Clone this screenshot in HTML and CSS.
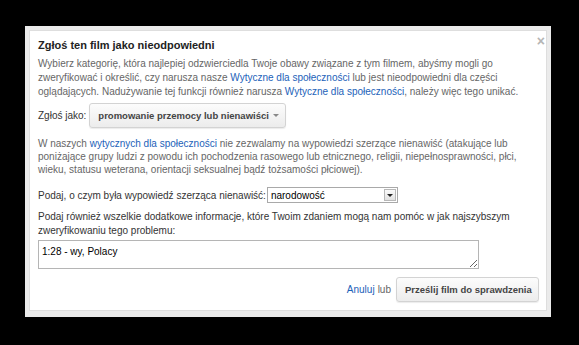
FILE: index.html
```html
<!DOCTYPE html>
<html lang="pl">
<head>
    <meta charset="UTF-8">
    <title>Zgłoś ten film</title>
    <link rel="stylesheet" href="styles.css">
</head>
<body>
    <div class="dialog">
        <div class="dialog-inner">
            <span class="close">&#215;</span>
            <h2 class="title">Zgłoś ten film jako nieodpowiedni</h2>
            <p class="help">Wybierz kategorię, która najlepiej odzwierciedla Twoje obawy związane z tym filmem, abyśmy mogli go zweryfikować i określić, czy narusza nasze <a href="#">Wytyczne dla społeczności</a> lub jest nieodpowiedni dla części oglądających. Nadużywanie tej funkcji również narusza <a href="#">Wytyczne dla społeczności</a>, należy więc tego unikać.</p>

            <div class="row reason-row">
                <span class="label">Zgłoś jako:</span>
                <button class="btn reason-btn">promowanie przemocy lub nienawiści <span class="caret"></span></button>
            </div>

            <p class="help note">W naszych <a href="#">wytycznych dla społeczności</a> nie zezwalamy na wypowiedzi szerzące nienawiść (atakujące lub poniżające grupy ludzi z powodu ich pochodzenia rasowego lub etnicznego, religii, niepełnosprawności, płci, wieku, statusu weterana, orientacji seksualnej bądź tożsamości płciowej).</p>

            <div class="row select-row">
                <span class="label">Podaj, o czym była wypowiedź szerząca nienawiść:</span>
                <div class="select">
                    <span class="select-value">narodowość</span>
                    <span class="select-arrow"></span>
                </div>
            </div>

            <p class="label extra">Podaj również wszelkie dodatkowe informacje, które Twoim zdaniem mogą nam pomóc w jak najszybszym zweryfikowaniu tego problemu:</p>
            <textarea class="details">1:28 - wy, Polacy</textarea>

            <div class="actions">
                <a href="#" class="cancel">Anuluj</a><span class="or">lub</span>
                <button class="btn submit-btn">Prześlij film do sprawdzenia</button>
            </div>
        </div>
    </div>
</body>
</html>
```

FILE: styles.css
```css
body {
    margin: 0;
    background-color: #000;
    font-family: "Liberation Sans", Arial, sans-serif;
    font-size: 10px;
    color: #333;
}

.dialog {
    width: 516px;
    margin: 26px 0 0 25px;
    border: 5px solid #ebebeb;
    border-bottom-width: 7px;
    box-shadow: inset 0 0 0 1px #f4f4f4, 0 1px 0 #9a9a9a;
}

.dialog-inner {
    position: relative;
    background-color: #fff;
    padding: 7px 7px 8px 8px;
    border: 1px solid #dedede;
    margin: -1px;
}

.close {
    position: absolute;
    top: 3px;
    right: 1px;
    font-size: 14px;
    font-weight: bold;
    color: #b5b5b5;
    line-height: 14px;
}

.title {
    margin: 0;
    font-size: 11px;
    line-height: 14px;
    font-weight: bold;
    color: #222;
}

.help {
    margin: 5px 0 0;
    color: #666;
    line-height: 14px;
}

a {
    color: #1c62b9;
    text-decoration: none;
}

.row {
    display: flex;
    align-items: center;
    gap: 3px;
}

.reason-row {
    margin-top: 4px;
}

.label {
    color: #333;
}

.btn {
    font-family: "Liberation Sans", Arial, sans-serif;
    font-size: 9.5px;
    font-weight: bold;
    color: #444;
    height: 25px;
    padding: 0 8px;
    border: 1px solid #d3d3d3;
    border-radius: 3px;
    background: linear-gradient(#fcfcfc, #ececec);
    box-shadow: 0 1px 1px rgba(0, 0, 0, 0.08);
    white-space: nowrap;
}

.reason-btn {
    width: 197px;
    display: flex;
    align-items: center;
    justify-content: space-between;
}

.caret {
    border-left: 3px solid transparent;
    border-right: 3px solid transparent;
    border-top: 3px solid #888;
    margin-left: 4px;
}

.note {
    margin-top: 9px;
    line-height: 13px;
}

.select-row {
    margin-top: 11px;
    gap: 1px;
}

.select {
    width: 129px;
    height: 14px;
    border: 1px solid #a9a9a9;
    display: flex;
    align-items: center;
    justify-content: space-between;
    background-color: #fff;
}

.select-value {
    padding-left: 3px;
    color: #000;
}

.select-arrow {
    width: 12px;
    height: 12px;
    margin-right: 1px;
    border: 1px solid #b8b8b8;
    box-sizing: border-box;
    background: linear-gradient(#fafafa, #e2e2e2);
    position: relative;
}

.select-arrow::after {
    content: "";
    position: absolute;
    left: 2px;
    top: 4px;
    border-left: 3px solid transparent;
    border-right: 3px solid transparent;
    border-top: 3px solid #222;
}

.extra {
    margin: 7px 0 0;
    line-height: 14px;
}

.details {
    display: block;
    width: 441px;
    height: 29px;
    box-sizing: border-box;
    margin-top: 2px;
    padding: 5px 3px 2px;
    border: 1px solid #b5b5b5;
    font-family: "Liberation Sans", Arial, sans-serif;
    font-size: 10px;
    color: #000;
    resize: vertical;
}

.actions {
    margin-top: 8px;
    display: flex;
    justify-content: flex-end;
    align-items: center;
}

.cancel {
    font-size: 10px;
}

.or {
    color: #666;
    margin-left: 3px;
}

.submit-btn {
    width: 143px;
    margin-left: 5px;
}
```
